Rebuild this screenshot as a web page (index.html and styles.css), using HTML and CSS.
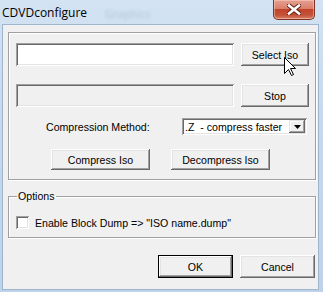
FILE: index.html
```html
<!DOCTYPE html>
<html lang="en">
<head>
    <meta charset="UTF-8">
    <title>CDVDconfigure</title>
    <link rel="stylesheet" href="styles.css">
</head>
<body>

    <div class="window">
        <div class="titlebar">
            <span class="title">CDVDconfigure</span>
            <span class="ghost">Graphics</span>
            <div class="close">
                <svg width="14" height="11" viewBox="0 0 14 11">
                    <path d="M2 1.5 L12 9.5 M12 1.5 L2 9.5" stroke="#5a1a10" stroke-width="4.4" stroke-linecap="square"/>
                    <path d="M2 1.5 L12 9.5 M12 1.5 L2 9.5" stroke="#fff" stroke-width="2.6" stroke-linecap="square"/>
                </svg>
            </div>
        </div>

        <div class="client">
            <div class="group main">
                <div class="row">
                    <input class="edit" type="text">
                    <button class="btn side">Select Iso</button>
                </div>
                <div class="row progress">
                    <input class="edit" type="text" disabled>
                    <button class="btn side">Stop</button>
                </div>
                <div class="row method">
                    <span class="label">Compression Method:</span>
                    <div class="combo">
                        <span class="combo-text">.Z&nbsp; - compress faster</span>
                        <span class="combo-arrow">
                            <svg width="7" height="4" viewBox="0 0 7 4"><path d="M0 0 H7 L3.5 4 Z" fill="#000"/></svg>
                        </span>
                    </div>
                </div>
                <div class="row actions">
                    <button class="btn wide">Compress Iso</button>
                    <button class="btn wide">Decompress Iso</button>
                </div>
            </div>

            <fieldset class="group options">
                <legend>Options</legend>
                <div class="check">
                    <span class="box"></span>
                    <span>Enable Block Dump =&gt; "ISO name.dump"</span>
                </div>
            </fieldset>

            <div class="footer">
                <button class="btn default">OK</button>
                <button class="btn">Cancel</button>
            </div>
        </div>

        <!-- mouse pointer over the Select Iso button -->
        <svg class="cursor" width="13" height="20" viewBox="0 0 13 20">
            <path d="M0.5 0.5 V16.5 L4.5 12.5 L7.5 18.5 L9.5 17.5 L6.5 11.5 H11.5 Z" fill="#fff" stroke="#000" stroke-width="1"/>
        </svg>
    </div>

</body>
</html>
```

FILE: styles.css
```css
body {
    margin: 0;
    background-color: #c8dbef;
}

.window {
    position: relative;
    width: 323px;
    height: 292px;
    display: flex;
    flex-direction: column;
    background: linear-gradient(180deg, #d3e3f3 0%, #c6d9ee 40%, #bed3ea 100%);
    overflow: hidden;
}

.titlebar {
    height: 25px;
    display: flex;
    align-items: flex-start;
    flex-shrink: 0;
}

.title {
    margin: 4px 0 0 2px;
    font-family: "Open Sans", sans-serif;
    font-size: 12px;
    color: #000;
}

.ghost {
    margin: 6px 0 0 18px;
    font-family: "Open Sans", sans-serif;
    font-size: 11px;
    color: rgba(90, 110, 140, 0.25);
    filter: blur(1.4px);
}

.close {
    margin-left: auto;
    margin-right: 8px;
    width: 42px;
    height: 20px;
    box-sizing: border-box;
    border: 1px solid #7d3325;
    border-top: none;
    border-radius: 0 0 5px 5px;
    background: linear-gradient(180deg, #e6a090 0%, #d9806c 45%, #c2432a 50%, #c4533a 80%, #d98368 100%);
    box-shadow: inset 0 0 0 1px rgba(255, 220, 210, 0.45);
    display: flex;
    align-items: center;
    justify-content: center;
}

.client {
    margin: 0 5px 0 3px;
    height: 264px;
    background-color: #f0f0f0;
    box-shadow: 0 0 0 1px #9fb5cd;
    font-family: "Liberation Sans", Arial, sans-serif;
    font-size: 10.6px;
    color: #000;
}

.group {
    box-sizing: border-box;
    width: 308px;
    margin-left: 5px;
    border: 1px solid #a0a0a0;
    box-shadow: 1px 1px 0 #fff, inset 1px 1px 0 #fff;
}

.main {
    margin-top: 7px;
    height: 148px;
    padding: 10px 0 9px 7px;
}

.row {
    display: flex;
    align-items: center;
    gap: 7px;
}

.progress {
    margin-top: 18px;
}

.method {
    margin-top: 11px;
    gap: 0;
}

.actions {
    margin-top: 14px;
    gap: 21px;
    padding-left: 35px;
}

.edit {
    box-sizing: border-box;
    width: 218px;
    height: 23px;
    margin: 0;
    border: none;
    background-color: #fff;
    box-shadow: inset 1px 1px 0 #a0a0a0, inset -1px -1px 0 #fff, inset 2px 2px 0 #696969, inset -2px -2px 0 #e3e3e3;
}

.edit:disabled {
    background-color: #f0f0f0;
}

.btn {
    box-sizing: border-box;
    margin: 0;
    padding: 0;
    border: none;
    background-color: #f0f0f0;
    font-family: "Liberation Sans", Arial, sans-serif;
    font-size: 10.6px;
    color: #000;
    box-shadow: inset -1px -1px 0 #696969, inset 1px 1px 0 #fff, inset -2px -2px 0 #a0a0a0, inset 2px 2px 0 #e3e3e3;
}

.side {
    width: 68px;
    height: 23px;
}

.wide {
    width: 99px;
    height: 21px;
}

.label {
    margin-left: 30px;
    width: 136px;
}

.combo {
    box-sizing: border-box;
    width: 125px;
    height: 17px;
    padding: 2px;
    display: flex;
    align-items: center;
    background-color: #fff;
    box-shadow: inset 1px 1px 0 #a0a0a0, inset -1px -1px 0 #fff, inset 2px 2px 0 #696969, inset -2px -2px 0 #e3e3e3;
}

.combo-text {
    flex: 1;
    padding-left: 1px;
    white-space: nowrap;
}

.combo-arrow {
    width: 16px;
    height: 13px;
    display: flex;
    align-items: center;
    justify-content: center;
    background-color: #f0f0f0;
    box-shadow: inset -1px -1px 0 #696969, inset 1px 1px 0 #e3e3e3, inset -2px -2px 0 #a0a0a0, inset 2px 2px 0 #fff;
}

.options {
    margin-top: 10px;
    height: 48px;
    padding: 0 0 8px 7px;
    min-width: 0;
}

.options legend {
    margin-left: 1px;
    padding: 0 1px;
    line-height: 13px;
}

.check {
    margin-top: 13px;
    display: flex;
    align-items: center;
    gap: 6px;
    height: 13px;
}

.box {
    width: 13px;
    height: 13px;
    box-sizing: border-box;
    background-color: #fff;
    box-shadow: inset 1px 1px 0 #a0a0a0, inset -1px -1px 0 #fff, inset 2px 2px 0 #696969, inset -2px -2px 0 #e3e3e3;
}

.footer {
    margin-top: 17px;
    padding-right: 3px;
    display: flex;
    justify-content: flex-end;
    gap: 7px;
}

.footer .btn {
    width: 75px;
    height: 23px;
}

.footer .default {
    box-shadow: inset 0 0 0 1px #000, inset -2px -2px 0 #696969, inset 2px 2px 0 #fff, inset -3px -3px 0 #a0a0a0, inset 3px 3px 0 #e3e3e3;
}

.cursor {
    position: absolute;
    left: 284px;
    top: 57px;
}
```
